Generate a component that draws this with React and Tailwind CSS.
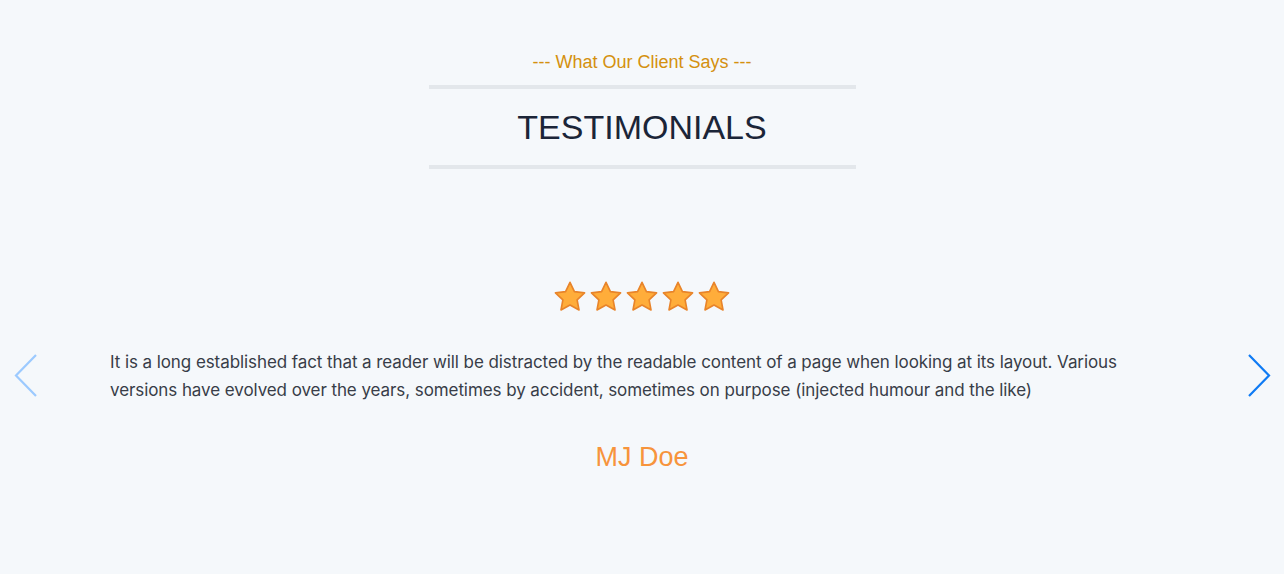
import React from "react";

function Star() {
  return (
    <svg width="36" height="36" viewBox="0 0 24 24">
      <path
        d="M12 2.2l2.95 6.2 6.75.85-4.95 4.7 1.25 6.7L12 17.4l-6 3.25 1.25-6.7-4.95-4.7 6.75-.85z"
        fill="#ffad3a"
        stroke="#e8842a"
        strokeWidth="1.1"
        strokeLinejoin="round"
      />
    </svg>
  );
}

export default function App() {
  return (
    <div
      className="w-full min-h-[574px] bg-[#f5f8fb] flex flex-col items-center"
      style={{ fontFamily: '"Liberation Sans", Arial, sans-serif' }}
    >
      <div className="pt-[51px] flex flex-col items-center">
        <div className="text-[18px] leading-[22px] text-[#d4900e]">--- What Our Client Says ---</div>
        <div className="mt-[12px] w-[427px] h-[4px] bg-[#e3e7eb]" />
        <div className="h-[76px] flex items-center justify-center text-[34px] text-[#1b2538]">TESTIMONIALS</div>
        <div className="w-[427px] h-[4px] bg-[#e3e7eb]" />
      </div>

      <div className="w-full mt-[110px] flex items-start">
        <div className="w-[110px] flex justify-start pl-[13px] pt-[74px]">
          <svg width="26" height="46" viewBox="0 0 26 46" fill="none">
            <path d="M23 2L3 22.5L23 43" stroke="#9ccaff" strokeWidth="2.2" />
          </svg>
        </div>
        <div className="flex-1 flex flex-col items-center">
          <div className="flex">
            <Star />
            <Star />
            <Star />
            <Star />
            <Star />
          </div>
          <p
            className="mt-[33px] self-stretch text-[17px] leading-[28px] tracking-[-0.08px] text-[#383d48]"
            style={{ fontFamily: "Inter, sans-serif" }}
          >
            It is a long established fact that a reader will be distracted by the readable content of a page when looking at its layout. Various versions have evolved over the years, sometimes by accident, sometimes on purpose (injected humour and the like)
          </p>
          <div className="mt-[33px] text-[27px] text-[#f7943c]">MJ Doe</div>
        </div>
        <div className="w-[110px] flex justify-end pr-[12px] pt-[74px]">
          <svg width="26" height="46" viewBox="0 0 26 46" fill="none">
            <path d="M3 2L23 22.5L3 43" stroke="#0f7bf4" strokeWidth="2.2" />
          </svg>
        </div>
      </div>
    </div>
  );
}
